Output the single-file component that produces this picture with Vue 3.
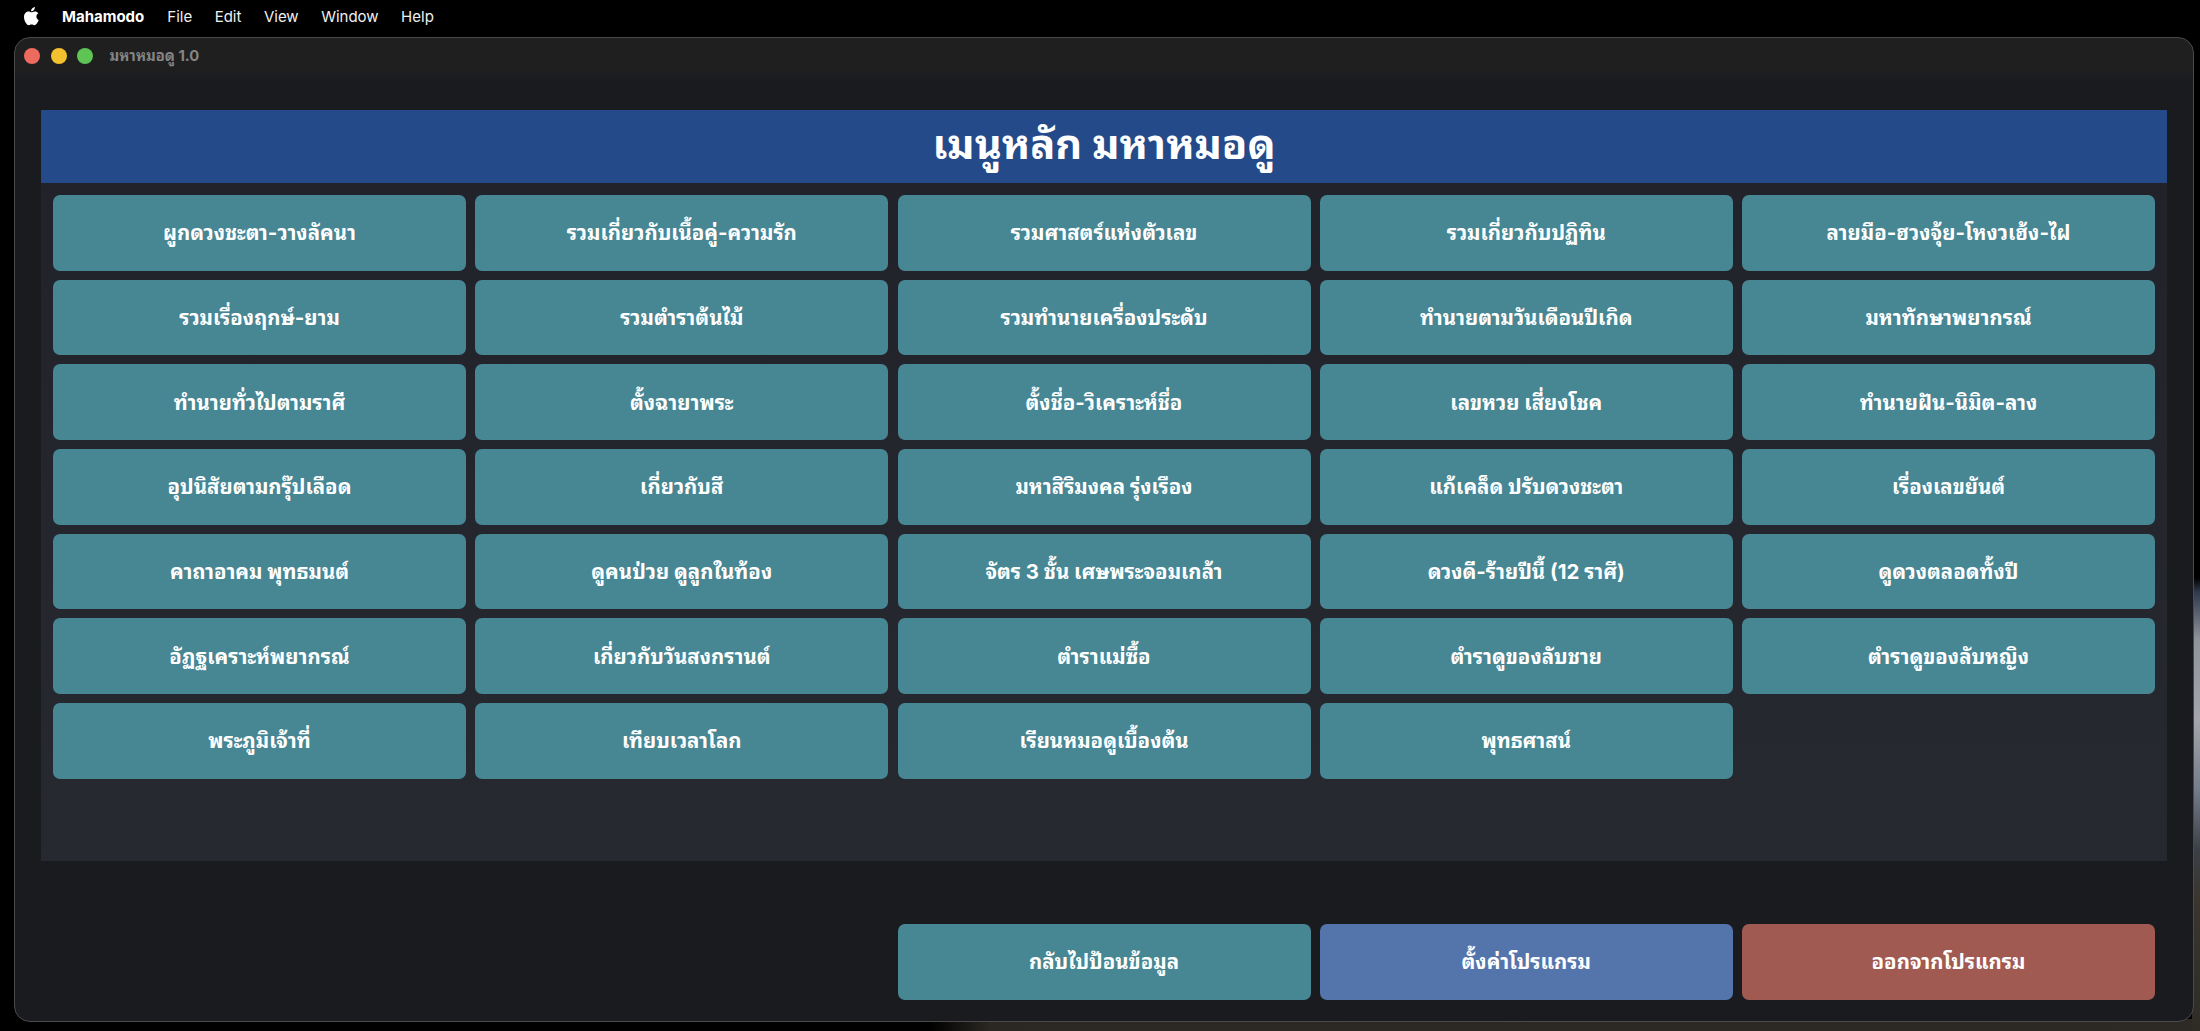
<script setup>
const rows = [
  'ผูกดวงชะตา-วางลัคนา', 'รวมเกี่ยวกับเนื้อคู่-ความรัก', 'รวมศาสตร์แห่งตัวเลข', 'รวมเกี่ยวกับปฏิทิน', 'ลายมือ-ฮวงจุ้ย-โหงวเฮ้ง-ไฝ',
  'รวมเรื่องฤกษ์-ยาม', 'รวมตำราต้นไม้', 'รวมทำนายเครื่องประดับ', 'ทำนายตามวันเดือนปีเกิด', 'มหาทักษาพยากรณ์',
  'ทำนายทั่วไปตามราศี', 'ตั้งฉายาพระ', 'ตั้งชื่อ-วิเคราะห์ชื่อ', 'เลขหวย เสี่ยงโชค', 'ทำนายฝัน-นิมิต-ลาง',
  'อุปนิสัยตามกรุ๊ปเลือด', 'เกี่ยวกับสี', 'มหาสิริมงคล รุ่งเรือง', 'แก้เคล็ด ปรับดวงชะตา', 'เรื่องเลขยันต์',
  'คาถาอาคม พุทธมนต์', 'ดูคนป่วย ดูลูกในท้อง', 'จัตร 3 ชั้น เศษพระจอมเกล้า', 'ดวงดี-ร้ายปีนี้ (12 ราศี)', 'ดูดวงตลอดทั้งปี',
  'อัฏฐเคราะห์พยากรณ์', 'เกี่ยวกับวันสงกรานต์', 'ตำราแม่ซื้อ', 'ตำราดูของลับชาย', 'ตำราดูของลับหญิง',
  'พระภูมิเจ้าที่', 'เทียบเวลาโลก', 'เรียนหมอดูเบื้องต้น', 'พุทธศาสน์'
]
const menus = ['File', 'Edit', 'View', 'Window', 'Help']
</script>

<template>
  <div class="screen">
    <div class="menubar">
      <svg class="apple" viewBox="0 0 17 20" width="17" height="20">
        <path fill="#fff" d="M11.9 1c.1 1.1-.3 2.1-1 2.9-.7.8-1.7 1.4-2.8 1.3-.1-1 .4-2.1 1-2.8C9.8 1.600 10.900 1.100 11.900 1zM15.300 7.200c-1.200.8-1.900 1.900-1.900 3.300 0 1.600.9 2.900 2.300 3.500-.4 1.200-1 2.300-1.700 3.300-.7 1-1.500 1.900-2.600 1.900-1.100 0-1.500-.7-2.800-.7-1.300 0-1.800.7-2.800.7-1.100 0-1.900-1-2.700-2C1.900 15.700 1 13.300 1 11c0-3.600 2.300-5.500 4.600-5.500 1.200 0 2.200.8 3 .8.700 0 1.900-.9 3.300-.9 1.300 0 2.500.6 3.400 1.800z"/>
      </svg>
      <span class="app-name">Mahamodo</span>
      <span v-for="m in menus" :key="m" class="menu-item">{{ m }}</span>
    </div>
    <div class="window">
      <div class="titlebar">
        <span class="dot red"></span>
        <span class="dot yellow"></span>
        <span class="dot green"></span>
        <span class="title">มหาหมอดู 1.0</span>
      </div>
      <div class="content">
        <div class="panel">
          <h1 class="heading">เมนูหลัก มหาหมอดู</h1>
          <div class="grid">
            <button v-for="r in rows" :key="r" class="btn teal">{{ r }}</button>
          </div>
        </div>
        <div class="actions">
          <span></span>
          <span></span>
          <button class="btn teal">กลับไปป้อนข้อมูล</button>
          <button class="btn blue">ตั้งค่าโปรแกรม</button>
          <button class="btn red-btn">ออกจากโปรแกรม</button>
        </div>
      </div>
    </div>
  </div>
</template>

<style>
html, body { margin: 0; background: #000; }
</style>

<style scoped>
.screen {
  width: 2200px;
  height: 1031px;
  overflow: hidden;
  background:
    linear-gradient(180deg, #000 0, #000 578px, #2f3a4c 592px, #8f939c 640px, #a4a6ac 720px, #737c8b 790px, #3c3f47 850px, #3a362e 900px, #2f2c26 100%) right top / 8px 100% no-repeat,
    linear-gradient(90deg, #000 0, #000 930px, #2b2823 990px, #2d2a25 100%) left bottom / 100% 12px no-repeat,
    #000;
  display: flex;
  flex-direction: column;
  font-family: Inter, "Liberation Sans", "Noto Sans Thai Looped", "Noto Sans Thai", "Noto Sans", sans-serif;
  color: #fff;
}
.menubar {
  height: 32px;
  margin-bottom: 5px;
  flex: none;
  display: flex;
  align-items: center;
  padding-left: 23px;
  font-size: 15px;
}
.apple { margin-right: 22px; }
.app-name { font-weight: 700; margin-right: 23px; }
.menu-item { margin-right: 22.500px; color: #f0f0f0; }
.window {
  width: 2180px;
  height: 985px;
  margin-left: 14px;
  box-sizing: border-box;
  border: 1px solid #4a4a4c;
  border-radius: 16px;
  overflow: hidden;
  background: linear-gradient(180deg, #1f1f20 0, #1f1f20 30px, #1a1b1f 44px);
}
.titlebar {
  height: 35px;
  display: flex;
  align-items: center;
  padding-left: 9px;
}
.dot { width: 16px; height: 16px; border-radius: 50%; margin-right: 10.500px; }
.red { background: #ed6a5f; }
.yellow { background: #f4c22e; }
.green { background: #5ec454; }
.title { font-size: 14.800px; font-weight: 700; color: #858585; margin-left: 6px; margin-bottom: 3px; }
.content { padding: 37px 26px 0; }
.panel {
  height: 751px;
  background: linear-gradient(180deg, #212229, #272931);
}
.heading {
  margin: 0;
  height: 73px;
  line-height: 69px;
  background: #254a8a;
  text-align: center;
  font-size: 41.500px;
  font-weight: 700;
  color: #fff;
}
.grid {
  display: grid;
  grid-template-columns: repeat(5, 413px);
  column-gap: 9.250px;
  grid-auto-rows: 75.300px;
  row-gap: 9.400px;
  padding: 12px 12px 0;
}
.actions {
  display: grid;
  grid-template-columns: repeat(5, 413px);
  column-gap: 9.250px;
  padding: 63px 12px 0;
}
.btn {
  border: none;
  border-radius: 7px;
  color: #fff;
  font-family: inherit;
  font-size: 20.400px;
  font-weight: 700;
  padding: 0 0 3px;
  height: 75.500px;
}
.teal { background: #478693; }
.blue { background: #5474ac; }
.red-btn { background: #a15a52; }
</style>
